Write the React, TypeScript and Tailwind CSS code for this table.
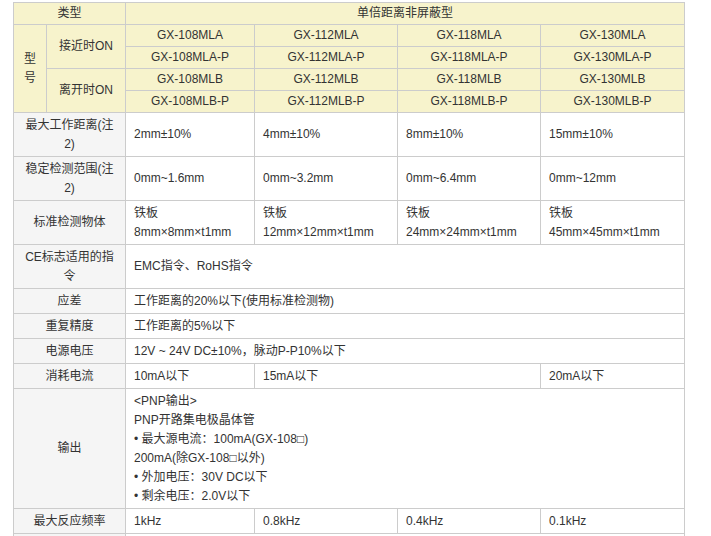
const models = [
  ["GX-108MLA", "GX-112MLA", "GX-118MLA", "GX-130MLA"],
  ["GX-108MLA-P", "GX-112MLA-P", "GX-118MLA-P", "GX-130MLA-P"],
  ["GX-108MLB", "GX-112MLB", "GX-118MLB", "GX-130MLB"],
  ["GX-108MLB-P", "GX-112MLB-P", "GX-118MLB-P", "GX-130MLB-P"],
];

const output = [
  "<PNP输出>",
  "PNP开路集电极晶体管",
  "• 最大源电流：100mA(GX-108□)",
  "200mA(除GX-108□以外)",
  "• 外加电压：30V DC以下",
  "• 剩余电压：2.0V以下",
];

const cell = "border border-[#cccccc] p-0 align-middle";
const head = `${cell} bg-[#f7f3cc] text-center`;
const label = `${cell} bg-[#f5f5f5] text-center px-2`;
const data = `${cell} bg-white pl-2 text-left`;

export default function App() {
  return (
    <div className="min-h-screen bg-white pt-[2px] pl-[13px] font-['Liberation_Sans','Noto_Sans_CJK_SC',sans-serif] text-[12px] leading-[19px] text-[#333333]">
      <table className="w-[671px] table-fixed border-collapse">
        <colgroup>
          <col className="w-[33px]" />
          <col className="w-[79px]" />
          <col className="w-[129px]" />
          <col className="w-[143px]" />
          <col className="w-[143px]" />
          <col className="w-[144px]" />
        </colgroup>
        <tbody>
          <tr className="h-[22px]">
            <td colSpan={2} className={head}>类型</td>
            <td colSpan={4} className={head}>单倍距离非屏蔽型</td>
          </tr>
          {models.map((row, i) => (
            <tr key={i} className="h-[22px]">
              {i === 0 && (
                <td rowSpan={4} className={head}>
                  型<br />号
                </td>
              )}
              {i % 2 === 0 && (
                <td rowSpan={2} className={head}>
                  {i === 0 ? "接近时ON" : "离开时ON"}
                </td>
              )}
              {row.map((m) => (
                <td key={m} className={head}>{m}</td>
              ))}
            </tr>
          ))}
          <tr className="h-[44px]">
            <td colSpan={2} className={label}>最大工作距离(注<br />2)</td>
            <td className={data}>2mm±10%</td>
            <td className={data}>4mm±10%</td>
            <td className={data}>8mm±10%</td>
            <td className={data}>15mm±10%</td>
          </tr>
          <tr className="h-[44px]">
            <td colSpan={2} className={label}>稳定检测范围(注<br />2)</td>
            <td className={data}>0mm~1.6mm</td>
            <td className={data}>0mm~3.2mm</td>
            <td className={data}>0mm~6.4mm</td>
            <td className={data}>0mm~12mm</td>
          </tr>
          <tr className="h-[44px]">
            <td colSpan={2} className={label}>标准检测物体</td>
            <td className={data}>铁板<br />8mm×8mm×t1mm</td>
            <td className={data}>铁板<br />12mm×12mm×t1mm</td>
            <td className={data}>铁板<br />24mm×24mm×t1mm</td>
            <td className={data}>铁板<br />45mm×45mm×t1mm</td>
          </tr>
          <tr className="h-[44px]">
            <td colSpan={2} className={label}>CE标志适用的指<br />令</td>
            <td colSpan={4} className={data}>EMC指令、RoHS指令</td>
          </tr>
          <tr className="h-[25px]">
            <td colSpan={2} className={label}>应差</td>
            <td colSpan={4} className={data}>工作距离的20%以下(使用标准检测物)</td>
          </tr>
          <tr className="h-[25px]">
            <td colSpan={2} className={label}>重复精度</td>
            <td colSpan={4} className={data}>工作距离的5%以下</td>
          </tr>
          <tr className="h-[25px]">
            <td colSpan={2} className={label}>电源电压</td>
            <td colSpan={4} className={data}>12V ~ 24V DC±10%，脉动P-P10%以下</td>
          </tr>
          <tr className="h-[25px]">
            <td colSpan={2} className={label}>消耗电流</td>
            <td className={data}>10mA以下</td>
            <td colSpan={2} className={data}>15mA以下</td>
            <td className={data}>20mA以下</td>
          </tr>
          <tr className="h-[120px]">
            <td colSpan={2} className={label}>输出</td>
            <td colSpan={4} className={data}>
              {output.map((line) => (
                <div key={line}>{line}</div>
              ))}
            </td>
          </tr>
          <tr className="h-[25px]">
            <td colSpan={2} className={label}>最大反应频率</td>
            <td className={data}>1kHz</td>
            <td className={data}>0.8kHz</td>
            <td className={data}>0.4kHz</td>
            <td className={data}>0.1kHz</td>
          </tr>
          <tr className="h-[25px]">
            <td colSpan={2} className={label} />
            <td colSpan={4} className={data} />
          </tr>
        </tbody>
      </table>
    </div>
  );
}
